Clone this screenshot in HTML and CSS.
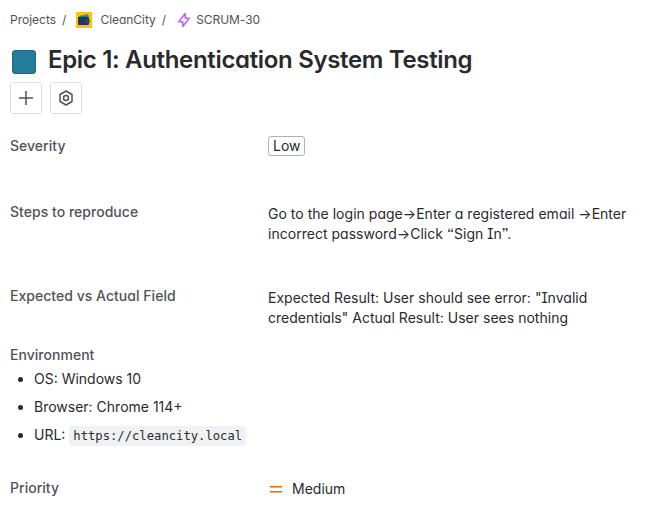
FILE: index.html
```html
<!DOCTYPE html>
<html lang="en"><head><meta charset="utf-8"><title>SCRUM-30</title><link rel="stylesheet" href="styles.css"></head>
<body><main class="issue">
<nav class="crumbs"><span class="c-projects">Projects</span><span class="slash">/</span>
<svg class="avatar" width="16" height="16" viewBox="0 0 16 16"><rect width="16" height="16" fill="#ffc400"/><path d="M3 5L5 3L7 3.5L10 2L12.5 3V5.5H3Z" fill="#00a3bf"/><rect x="2" y="4.75" width="11" height="8.25" rx="1.25" fill="#253858"/><rect x="9.5" y="7.5" width="4.5" height="3" rx="1" fill="#344f73"/></svg>
<span class="c-name">CleanCity</span><span class="slash">/</span>
<svg class="bolt" width="16" height="16" viewBox="0 0 16 16"><path d="M9.25 1.5V6.25H13.25L6.75 14.5V9.75H2.75Z" fill="none" stroke="#bf63f3" stroke-width="1.5" stroke-linejoin="round"/></svg>
<span class="c-key">SCRUM-30</span></nav>
<header class="title"><span class="swatch"></span><h1>Epic 1: Authentication System Testing</h1></header>
<div class="actions">
<button aria-label="Add"><svg width="16" height="16" viewBox="0 0 16 16"><path d="M8 1v14M1 8h14" stroke="#505258" stroke-width="1.5"/></svg></button>
<button aria-label="Configure"><svg width="16" height="16" viewBox="0 0 16 16" fill="none" stroke="#505258" stroke-width="1.5"><path d="M8 1L14 4.5V11.5L8 15L2 11.5V4.5Z" stroke-linejoin="round"/><circle cx="8" cy="8" r="2.5"/></svg></button></div>
<section class="row severity"><h2>Severity</h2><div><span class="tag">Low</span></div></section>
<section class="row steps"><h2>Steps to reproduce</h2><p><span class="line">Go to the login page→Enter a registered email →Enter</span><span class="line">incorrect password→Click “Sign In”.</span></p></section>
<section class="row expected"><h2>Expected vs Actual Field</h2><p><span class="line">Expected Result: User should see error: "Invalid</span><span class="line">credentials" Actual Result: User sees nothing</span></p></section>
<section class="environment"><h2>Environment</h2><ul><li>OS: Windows 10</li><li>Browser: Chrome 114+</li><li>URL: <code>https://cleancity.local</code></li></ul></section>
<section class="row priority"><h2>Priority</h2><div class="value"><svg width="16" height="16" viewBox="0 0 16 16"><path d="M2 5.75h12M2 10.75h12" stroke="#e06c00" stroke-width="1.5"/></svg><span>Medium</span></div></section>
</main></body></html>
```
FILE: styles.css
```css
*{box-sizing:border-box}
body{margin:0;background:#fff;color:#292a2e;font:14px/20px Inter,sans-serif;font-feature-settings:"cv11","cv08","ss03"}
.issue{padding:10px 10px 0;height:523px;overflow:hidden}
h1,h2,p,ul{margin:0}
.crumbs{display:flex;align-items:center;height:20px;font-size:12px;color:#505258;white-space:nowrap}
.slash{margin:0 10px 0 6px}
.c-name{margin-left:8px;letter-spacing:-.03px}
.c-key{margin-left:4px;letter-spacing:-.05px}
.title{display:flex;align-items:center;gap:12px;height:28px;margin-top:16px;padding-left:2px}
.swatch{width:24px;height:24px;border-radius:3px;background:#227d9b;border:1px solid #1b6a84;margin-top:4px}
h1{font-size:24px;line-height:28px;font-weight:640;letter-spacing:-.33px;white-space:nowrap}
.actions{display:flex;gap:8px;margin-top:8px}
button{width:32px;height:32px;padding:0;border:1px solid #dddee1;border-radius:3px;background:#fff;display:grid;place-items:center}
h2{font-size:14px;line-height:20px;font-weight:480;letter-spacing:.03px;color:#505258}
.row{display:grid;grid-template-columns:258px 1fr;align-items:start}
.severity{margin-top:22px;height:66px}
.tag{display:inline-block;width:37px;height:20px;line-height:18px;padding:0 4px;border:1px solid #b0b2b9;border-radius:3px}
.steps{height:84px}
.steps p,.expected p{padding-top:2px}
.expected{height:59px}
.line{display:block;white-space:nowrap;letter-spacing:.02px}
ul{padding-left:24px;margin-top:4px}
li{height:20px;margin-bottom:8px;white-space:nowrap}
code{font:12.2px/20px "DejaVu Sans Mono",monospace;background:#f0f1f2;padding:3px 4px;border-radius:3px}
.priority{margin-top:33px}
.value{display:flex;align-items:center;gap:8px;padding-top:1px}
```
